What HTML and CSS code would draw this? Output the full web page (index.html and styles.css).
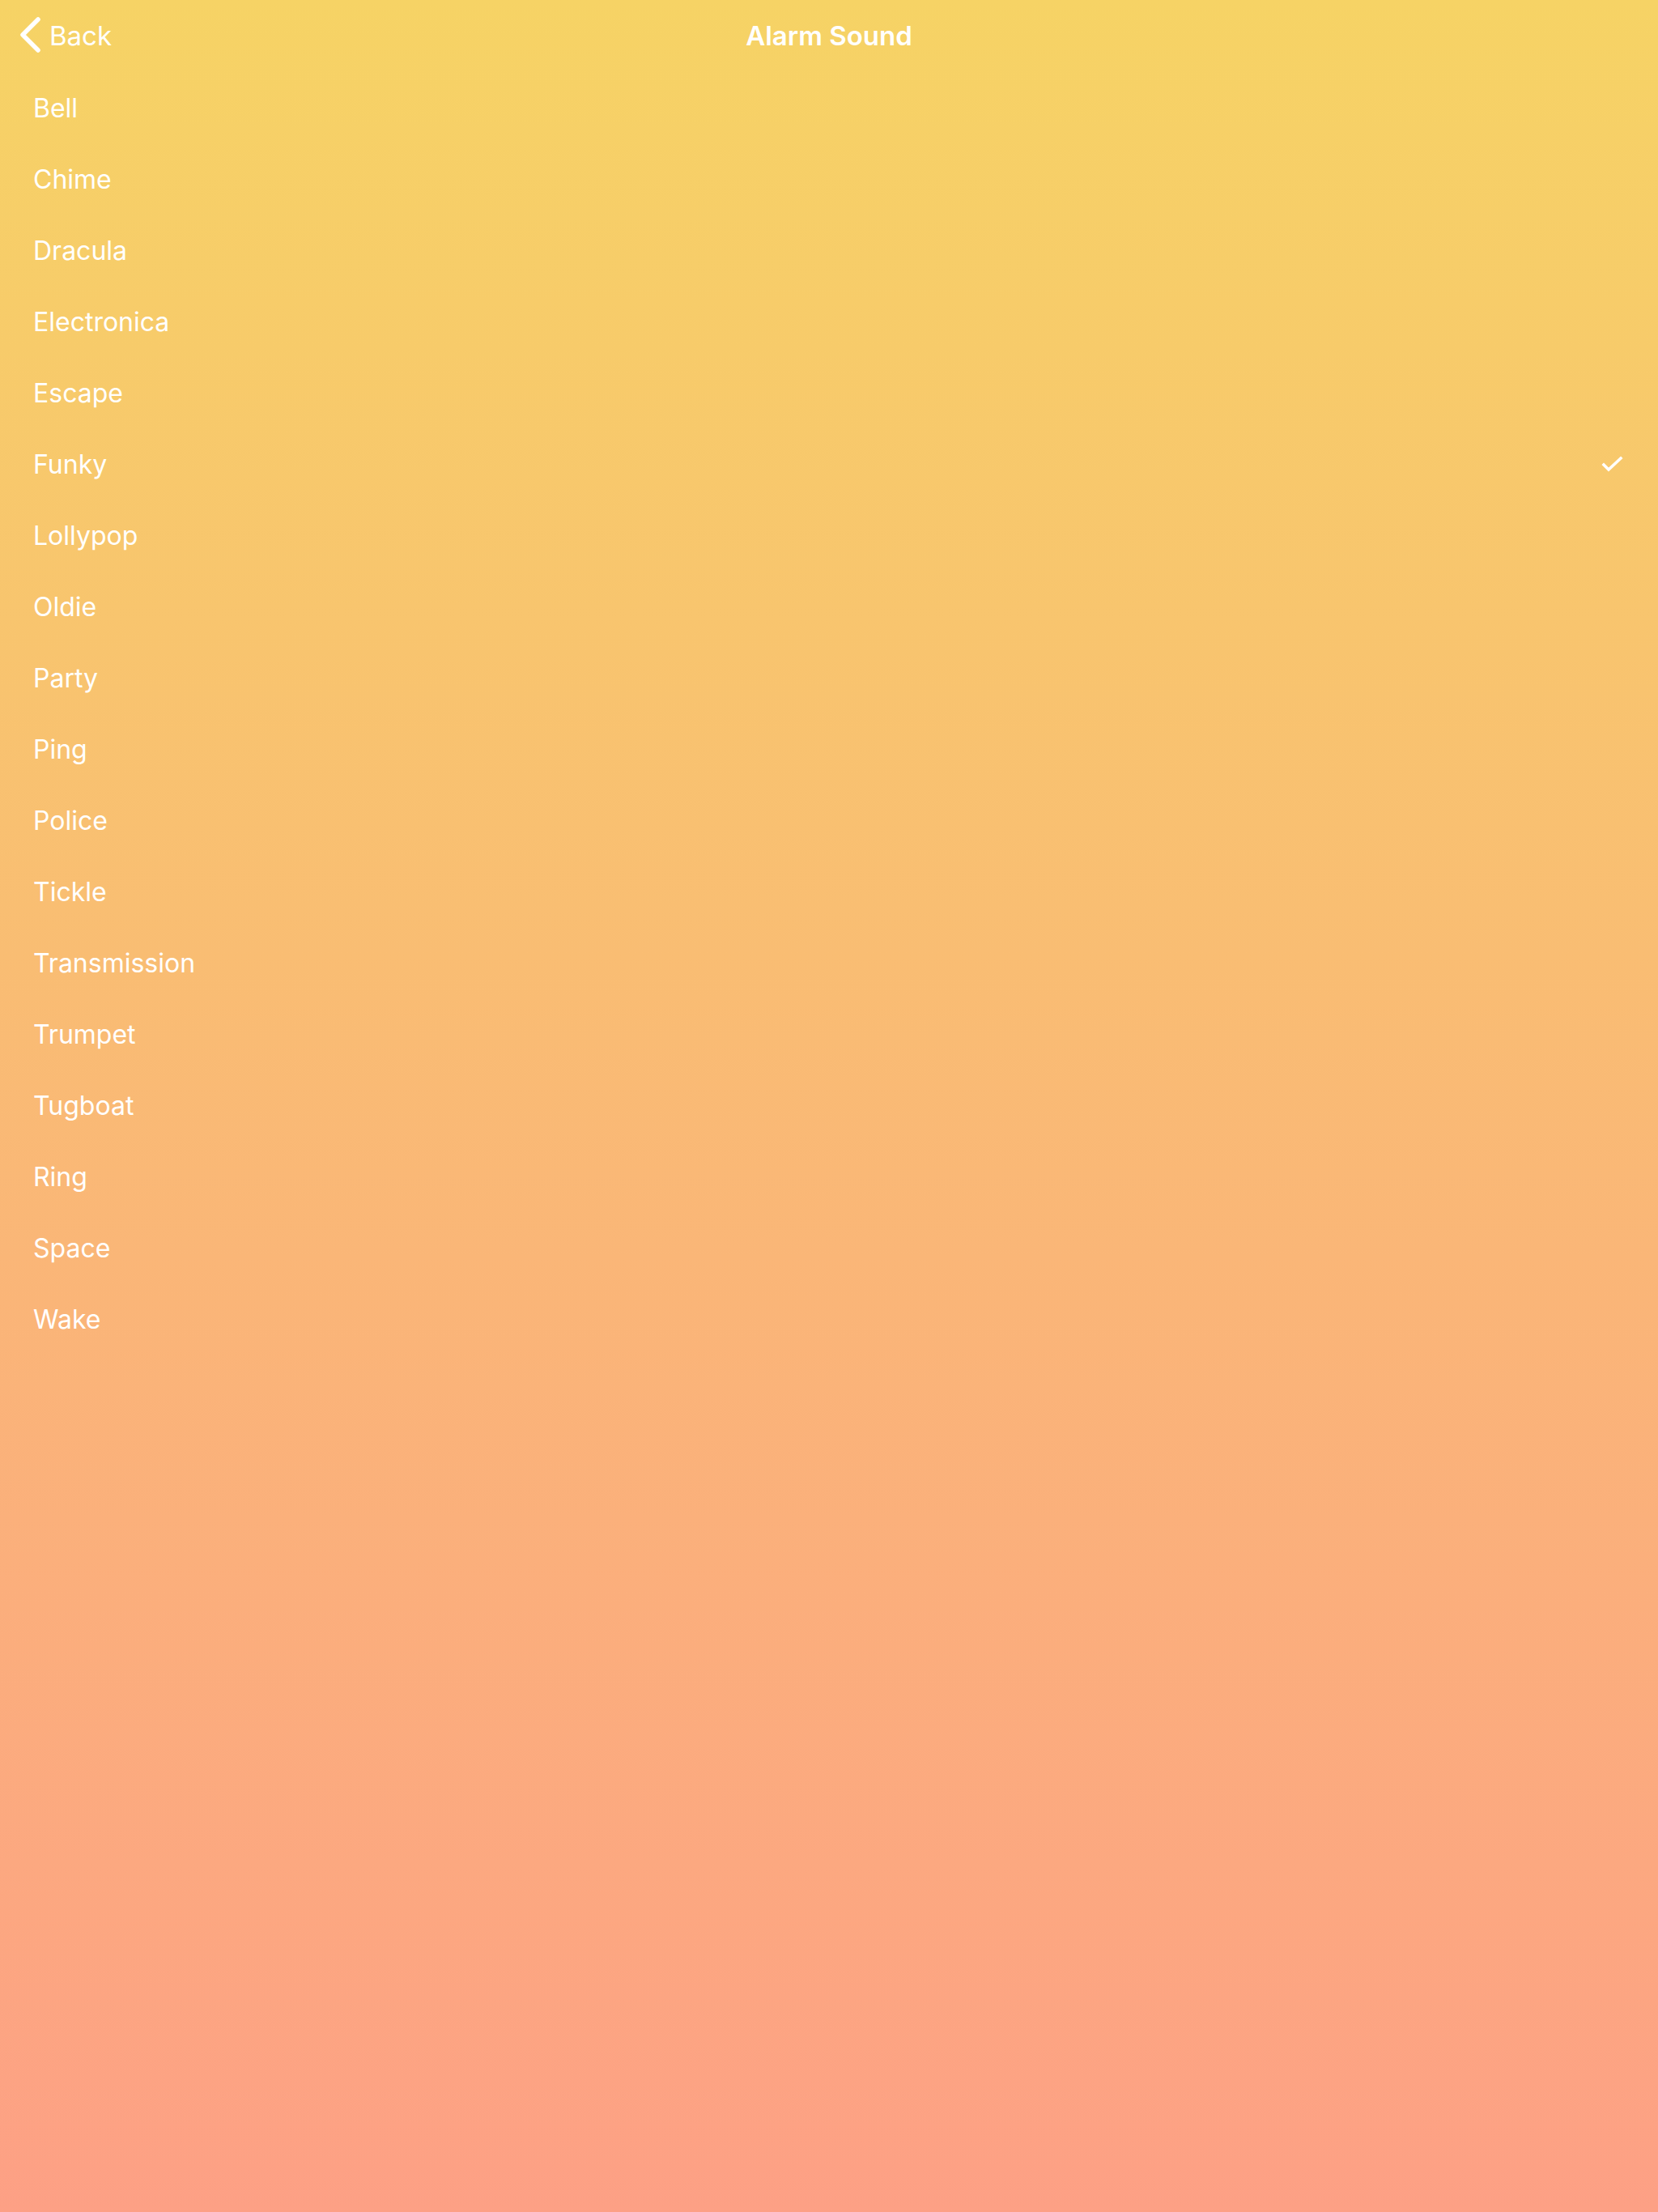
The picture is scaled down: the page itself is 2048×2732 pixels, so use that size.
FILE: index.html
```html
<!DOCTYPE html>
<html lang="en">
<head>
<meta charset="utf-8">
<title>Alarm Sound</title>
<link rel="stylesheet" href="styles.css">
</head>
<body>
<div class="screen">
  <header class="navbar">
    <div class="back">
      <svg class="chevron" width="30" height="46" viewBox="0 0 30 46"><path d="M23 3 L4 22 L23 41" fill="none" stroke="#fff" stroke-width="5.5" stroke-linecap="round" stroke-linejoin="round"/></svg>
      <span class="back-label">Back</span>
    </div>
    <h1 class="title">Alarm Sound</h1>
  </header>
  <ul class="list">
    <li class="row"><span>Bell</span></li>
    <li class="row"><span>Chime</span></li>
    <li class="row"><span>Dracula</span></li>
    <li class="row"><span>Electronica</span></li>
    <li class="row"><span>Escape</span></li>
    <li class="row"><span>Funky</span>
      <svg class="check" width="28" height="22" viewBox="0 0 28 22"><path d="M3 11 L9 17 L24 3" fill="none" stroke="#fff" stroke-width="3.6" stroke-linecap="square"/></svg>
    </li>
    <li class="row"><span>Lollypop</span></li>
    <li class="row"><span>Oldie</span></li>
    <li class="row"><span>Party</span></li>
    <li class="row"><span>Ping</span></li>
    <li class="row"><span>Police</span></li>
    <li class="row"><span>Tickle</span></li>
    <li class="row"><span>Transmission</span></li>
    <li class="row"><span>Trumpet</span></li>
    <li class="row"><span>Tugboat</span></li>
    <li class="row"><span>Ring</span></li>
    <li class="row"><span>Space</span></li>
    <li class="row"><span>Wake</span></li>
  </ul>
</div>
</body>
</html>
```
FILE: styles.css
```css
* { box-sizing: border-box; }
html, body {
  margin: 0;
  padding: 0;
}
body {
  width: 2048px;
  height: 2732px;
  font-family: Inter, "Liberation Sans", sans-serif;
  color: #fff;
  background: linear-gradient(to bottom, #f6d365 0%, #fda085 100%);
  overflow: hidden;
}
.screen {
  width: 2048px;
  height: 2732px;
  display: flex;
  flex-direction: column;
}
.navbar {
  height: 88px;
  display: grid;
  grid-template-columns: 1fr auto 1fr;
  align-items: center;
}
.back {
  display: flex;
  align-items: center;
  gap: 7px;
  padding-left: 24px;
}
.chevron { display: block; }
.back-label {
  font-size: 33px;
  font-weight: 400;
  line-height: 1;
}
.title {
  margin: 0;
  font-size: 33px;
  font-weight: 600;
  line-height: 1;
}
.list {
  list-style: none;
  margin: 0;
  padding: 0;
}
.row {
  height: 88px;
  display: flex;
  align-items: center;
  justify-content: space-between;
  padding: 4px 42px 0 41px;
  font-size: 32px;
  font-weight: 400;
  line-height: 1;
}
.check { display: block; margin-top: 0; }
```
